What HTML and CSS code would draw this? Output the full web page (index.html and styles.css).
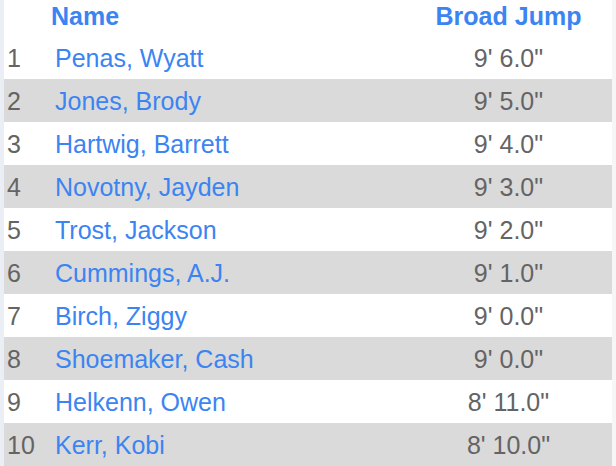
FILE: index.html
```html
<!DOCTYPE html>
<html>
<head>
<meta charset="utf-8">
<link rel="stylesheet" href="styles.css">
</head>
<body>
<div class="page">
  <div class="rail-left"></div>
  <table class="board">
    <colgroup>
      <col class="c-rank">
      <col class="c-name">
      <col class="c-val">
    </colgroup>
    <thead>
      <tr>
        <th></th>
        <th class="h-name">Name</th>
        <th class="h-val">Broad Jump</th>
      </tr>
    </thead>
    <tbody>
      <tr><td class="rank">1</td><td class="name">Penas, Wyatt</td><td class="val">9' 6.0"</td></tr>
      <tr class="alt"><td class="rank">2</td><td class="name">Jones, Brody</td><td class="val">9' 5.0"</td></tr>
      <tr><td class="rank">3</td><td class="name">Hartwig, Barrett</td><td class="val">9' 4.0"</td></tr>
      <tr class="alt"><td class="rank">4</td><td class="name">Novotny, Jayden</td><td class="val">9' 3.0"</td></tr>
      <tr><td class="rank">5</td><td class="name">Trost, Jackson</td><td class="val">9' 2.0"</td></tr>
      <tr class="alt"><td class="rank">6</td><td class="name">Cummings, A.J.</td><td class="val">9' 1.0"</td></tr>
      <tr><td class="rank">7</td><td class="name">Birch, Ziggy</td><td class="val">9' 0.0"</td></tr>
      <tr class="alt"><td class="rank">8</td><td class="name">Shoemaker, Cash</td><td class="val">9' 0.0"</td></tr>
      <tr><td class="rank">9</td><td class="name">Helkenn, Owen</td><td class="val">8' 11.0"</td></tr>
      <tr class="alt"><td class="rank">10</td><td class="name">Kerr, Kobi</td><td class="val">8' 10.0"</td></tr>
    </tbody>
  </table>
  <div class="rail-right"></div>
</div>
</body>
</html>
```

FILE: styles.css
```css
html, body {
  margin: 0;
  padding: 0;
  background: #ffffff;
}

.page {
  display: flex;
  width: 616px;
  height: 466px;
  overflow: hidden;
}

.rail-left {
  width: 4px;
  flex: 0 0 4px;
  background: #eceef5;
}

.rail-right {
  width: 4px;
  flex: 0 0 4px;
  background: #f6f6f8;
}

.board {
  flex: 1 1 auto;
  border-collapse: collapse;
  border-spacing: 0;
  table-layout: fixed;
  width: 608px;
  font-family: "Liberation Sans", Arial, Helvetica, sans-serif;
  font-size: 25px;
  line-height: 28px;
}

.c-rank { width: 47px; }
.c-name { width: 354px; }
.c-val { width: 207px; }

thead th {
  height: 36px;
  box-sizing: border-box;
  padding: 2px 0 6px 0;
  vertical-align: top;
  color: #3b84f2;
  font-weight: bold;
  text-align: left;
}

.h-val {
  text-align: center;
}

tbody td {
  height: 43px;
  box-sizing: border-box;
  padding: 8px 0 7px 0;
  vertical-align: top;
  white-space: nowrap;
}

tbody tr.alt td {
  background: #dadada;
}

.rank {
  color: #646464;
  padding-left: 3px;
}

tbody td.rank {
  padding-left: 3px;
}

tbody td.name {
  color: #3b84f2;
  padding-left: 4px;
}

.val {
  color: #646464;
  text-align: center;
}
```
